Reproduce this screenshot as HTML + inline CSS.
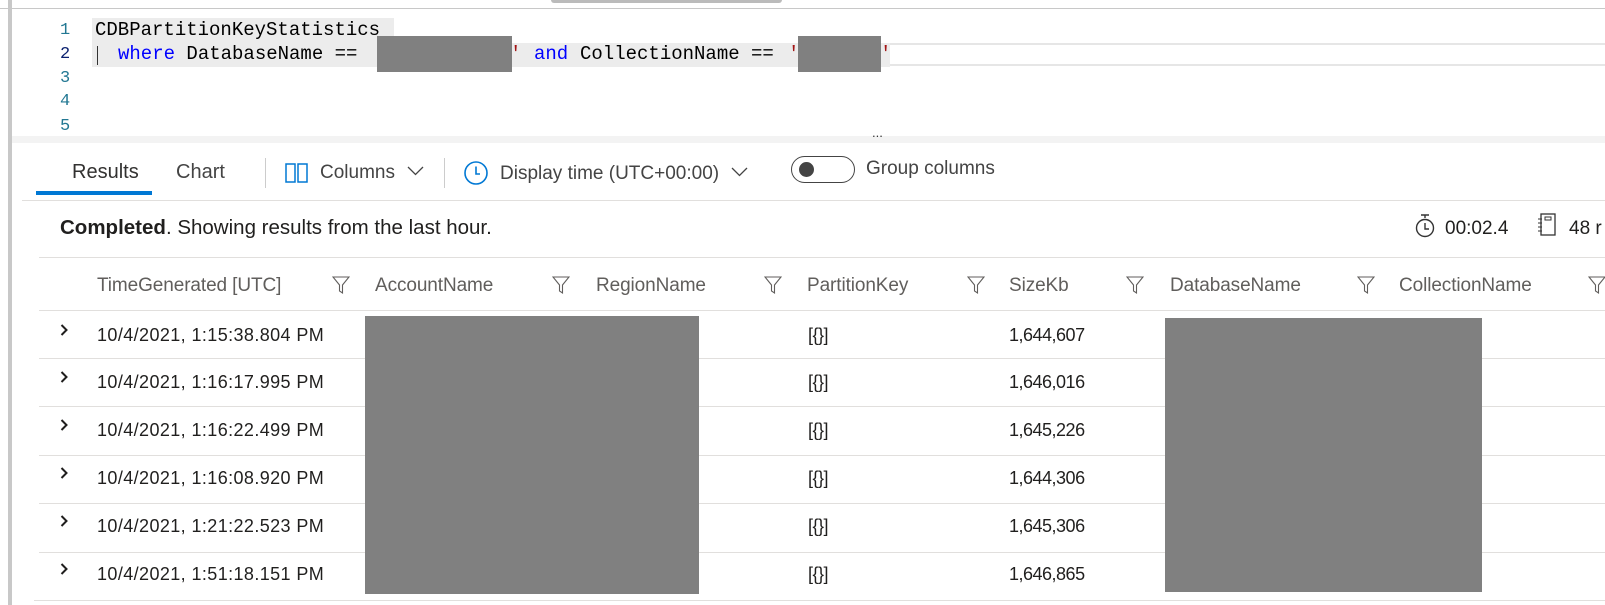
<!DOCTYPE html>
<html><head><meta charset="utf-8"><style>
body{margin:0;width:1605px;height:605px;background:#fff;position:relative;overflow:hidden;font-family:"Liberation Sans",sans-serif;color:#323130}
.a{position:absolute;white-space:nowrap;line-height:1}
.code{font-family:"Liberation Mono",monospace;font-size:19px;color:#000}
.ln{font-family:"Liberation Mono",monospace;font-size:17px;color:#237893}
.red{position:absolute;background:#808080}
.h{font-size:19px;color:#605e5c;letter-spacing:-0.1px}
.c{font-size:18px;color:#201f1e;letter-spacing:0.4px}
.n{font-size:18px;color:#201f1e;letter-spacing:-0.5px}
.f{position:absolute;width:18px;height:20px}
.sep{position:absolute;height:1px;background:#e1dfdd}
</style></head><body>
<div class="a" style="left:0;top:8px;width:1605px;height:1px;background:#c8c8c8"></div>
<div class="a" style="left:551px;top:0;width:231px;height:3px;background:#bbb;border-radius:0 0 3px 3px"></div>
<div class="a" style="left:8px;top:0;width:4px;height:605px;background:#c8c8c8"></div>
<!-- editor -->
<div class="a" style="left:92px;top:18px;width:302px;height:25px;background:#ececec"></div>
<div class="a" style="left:92px;top:43px;width:798px;height:24px;background:#ececec"></div>
<div class="a" style="left:890px;top:43px;width:715px;height:2px;background:#e6e6e6"></div>
<div class="a" style="left:890px;top:64px;width:715px;height:2px;background:#e6e6e6"></div>
<div class="a" style="left:97px;top:46px;width:1px;height:19px;background:#333"></div>
<div class="a ln" style="left:60px;top:22px">1</div>
<div class="a ln" style="left:60px;top:46px;color:#0b216f">2</div>
<div class="a ln" style="left:60px;top:70px">3</div>
<div class="a ln" style="left:60px;top:93px">4</div>
<div class="a ln" style="left:60px;top:118px">5</div>
<div class="a code" style="left:95px;top:21px">CDBPartitionKeyStatistics</div>
<div class="a code" style="left:118px;top:45px"><span style="color:#0000ff">where</span> DatabaseName ==</div>
<div class="a code" style="left:510px;top:45px;color:#a31515">'</div>
<div class="a code" style="left:534px;top:45px;color:#0000ff">and</div>
<div class="a code" style="left:580px;top:45px">CollectionName ==</div>
<div class="a code" style="left:788px;top:45px;color:#a31515">'</div>
<div class="a code" style="left:880px;top:45px;color:#a31515">'</div>
<div class="red" style="left:377px;top:36px;width:135px;height:36px"></div>
<div class="red" style="left:798px;top:36px;width:83px;height:36px"></div>
<div class="a" style="left:12px;top:136px;width:1593px;height:7px;background:#f3f3f3"></div>
<div class="a" style="left:872px;top:126px;font-size:13px;color:#333">...</div>
<!-- toolbar -->
<div class="a" style="left:72px;top:162px;font-size:20px;color:#323130">Results</div>
<div class="a" style="left:176px;top:162px;font-size:20px;color:#444">Chart</div>
<div class="a" style="left:36px;top:191px;width:116px;height:4px;background:#0078d4"></div>
<div class="sep" style="left:22px;top:200px;width:1583px"></div>
<div class="a" style="left:265px;top:158px;width:1px;height:30px;background:#ccc"></div>
<div class="a" style="left:444px;top:158px;width:1px;height:30px;background:#ccc"></div>
<svg class="a" style="left:285px;top:163px" width="24" height="21"><rect x="1" y="1" width="9" height="18" fill="none" stroke="#0078d4" stroke-width="1.5"/><rect x="13" y="1" width="9" height="18" fill="none" stroke="#0078d4" stroke-width="1.5"/></svg>
<div class="a" style="left:320px;top:163px;font-size:19px;color:#444">Columns</div>
<svg class="a" style="left:407px;top:166px" width="17" height="10"><path d="M1 1 L8.5 8.5 L16 1" fill="none" stroke="#444" stroke-width="1.3"/></svg>
<svg class="a" style="left:463px;top:160px" width="26" height="26"><circle cx="13" cy="13" r="11" fill="none" stroke="#0078d4" stroke-width="1.6"/><path d="M13 6.5 V14 H17" fill="none" stroke="#0078d4" stroke-width="1.6"/></svg>
<div class="a" style="left:500px;top:164px;font-size:19px;color:#444">Display time (UTC+00:00)</div>
<svg class="a" style="left:731px;top:167px" width="17" height="10"><path d="M1 1 L8.5 8.5 L16 1" fill="none" stroke="#444" stroke-width="1.3"/></svg>
<div class="a" style="left:791px;top:156px;width:64px;height:27px;border:1.5px solid #444;border-radius:14px;box-sizing:border-box"></div>
<div class="a" style="left:799px;top:162px;width:15px;height:15px;border-radius:8px;background:#444"></div>
<div class="a" style="left:866px;top:159px;font-size:19px;color:#444">Group columns</div>
<!-- status -->
<div class="a" style="left:60px;top:218px;font-size:20.5px;color:#201f1e"><b>Completed</b>. Showing results from the last hour.</div>
<svg class="a" style="left:1413px;top:213px" width="24" height="26"><path d="M8 2 H16 M12 2 V5" stroke="#333" stroke-width="1.4" fill="none"/><circle cx="12" cy="15" r="8.5" fill="none" stroke="#333" stroke-width="1.4"/><path d="M12 10 V16 H16" fill="none" stroke="#333" stroke-width="1.4"/></svg>
<div class="a" style="left:1445px;top:219px;font-size:19px;color:#201f1e">00:02.4</div>
<svg class="a" style="left:1536px;top:212px" width="22" height="26"><rect x="5" y="2" width="14" height="21" fill="none" stroke="#333" stroke-width="1.3"/><rect x="9" y="5" width="6" height="3" fill="none" stroke="#333"/><path d="M2 7H6M2 11H6M2 15H6M2 19H6" stroke="#333"/></svg>
<div class="a" style="left:1569px;top:219px;font-size:19px;color:#201f1e">48 r</div>
<div class="sep" style="left:39px;top:257px;width:1566px"></div>
<!-- header -->
<div class="a h" style="left:97px;top:276px">TimeGenerated [UTC]</div>
<div class="a h" style="left:375px;top:276px">AccountName</div>
<div class="a h" style="left:596px;top:276px">RegionName</div>
<div class="a h" style="left:807px;top:276px">PartitionKey</div>
<div class="a h" style="left:1009px;top:276px">SizeKb</div>
<div class="a h" style="left:1170px;top:276px">DatabaseName</div>
<div class="a h" style="left:1399px;top:276px">CollectionName</div>
<svg width="0" height="0" style="position:absolute"><defs><path id="fl" d="M1 2 H17 L10.5 10 V18 L7.5 16 V10 Z" fill="none" stroke="#605e5c" stroke-width="1.1"/></defs></svg>
<svg class="f" style="left:332px;top:275px"><use href="#fl"/></svg>
<svg class="f" style="left:552px;top:275px"><use href="#fl"/></svg>
<svg class="f" style="left:764px;top:275px"><use href="#fl"/></svg>
<svg class="f" style="left:967px;top:275px"><use href="#fl"/></svg>
<svg class="f" style="left:1126px;top:275px"><use href="#fl"/></svg>
<svg class="f" style="left:1357px;top:275px"><use href="#fl"/></svg>
<svg class="f" style="left:1588px;top:275px"><use href="#fl"/></svg>
<div class="sep" style="left:39px;top:310px;width:1566px"></div>
<!-- rows -->
<div class="sep" style="left:39px;top:358px;width:1566px"></div>
<div class="sep" style="left:39px;top:406px;width:1566px"></div>
<div class="sep" style="left:39px;top:455px;width:1566px"></div>
<div class="sep" style="left:39px;top:503px;width:1566px"></div>
<div class="sep" style="left:39px;top:552px;width:1566px"></div>
<div class="sep" style="left:34px;top:600px;width:1571px"></div>
<svg width="0" height="0" style="position:absolute"><defs><path id="ch" d="M1.5 1 L6.5 6 L1.5 11" fill="none" stroke="#201f1e" stroke-width="2"/></defs></svg>
<svg class="a" style="left:60px;top:324px" width="9" height="13"><use href="#ch"/></svg>
<svg class="a" style="left:60px;top:371px" width="9" height="13"><use href="#ch"/></svg>
<svg class="a" style="left:60px;top:419px" width="9" height="13"><use href="#ch"/></svg>
<svg class="a" style="left:60px;top:467px" width="9" height="13"><use href="#ch"/></svg>
<svg class="a" style="left:60px;top:515px" width="9" height="13"><use href="#ch"/></svg>
<svg class="a" style="left:60px;top:563px" width="9" height="13"><use href="#ch"/></svg>
<div class="a c" style="left:97px;top:326px">10/4/2021, 1:15:38.804 PM</div>
<div class="a c" style="left:97px;top:373px">10/4/2021, 1:16:17.995 PM</div>
<div class="a c" style="left:97px;top:421px">10/4/2021, 1:16:22.499 PM</div>
<div class="a c" style="left:97px;top:469px">10/4/2021, 1:16:08.920 PM</div>
<div class="a c" style="left:97px;top:517px">10/4/2021, 1:21:22.523 PM</div>
<div class="a c" style="left:97px;top:565px">10/4/2021, 1:51:18.151 PM</div>
<div class="a n" style="left:808px;top:326px">[{}]</div>
<div class="a n" style="left:808px;top:373px">[{}]</div>
<div class="a n" style="left:808px;top:421px">[{}]</div>
<div class="a n" style="left:808px;top:469px">[{}]</div>
<div class="a n" style="left:808px;top:517px">[{}]</div>
<div class="a n" style="left:808px;top:565px">[{}]</div>
<div class="a n" style="left:1009px;top:326px">1,644,607</div>
<div class="a n" style="left:1009px;top:373px">1,646,016</div>
<div class="a n" style="left:1009px;top:421px">1,645,226</div>
<div class="a n" style="left:1009px;top:469px">1,644,306</div>
<div class="a n" style="left:1009px;top:517px">1,645,306</div>
<div class="a n" style="left:1009px;top:565px">1,646,865</div>
<div class="red" style="left:365px;top:316px;width:334px;height:278px"></div>
<div class="red" style="left:1165px;top:318px;width:317px;height:274px"></div>
</body></html>
